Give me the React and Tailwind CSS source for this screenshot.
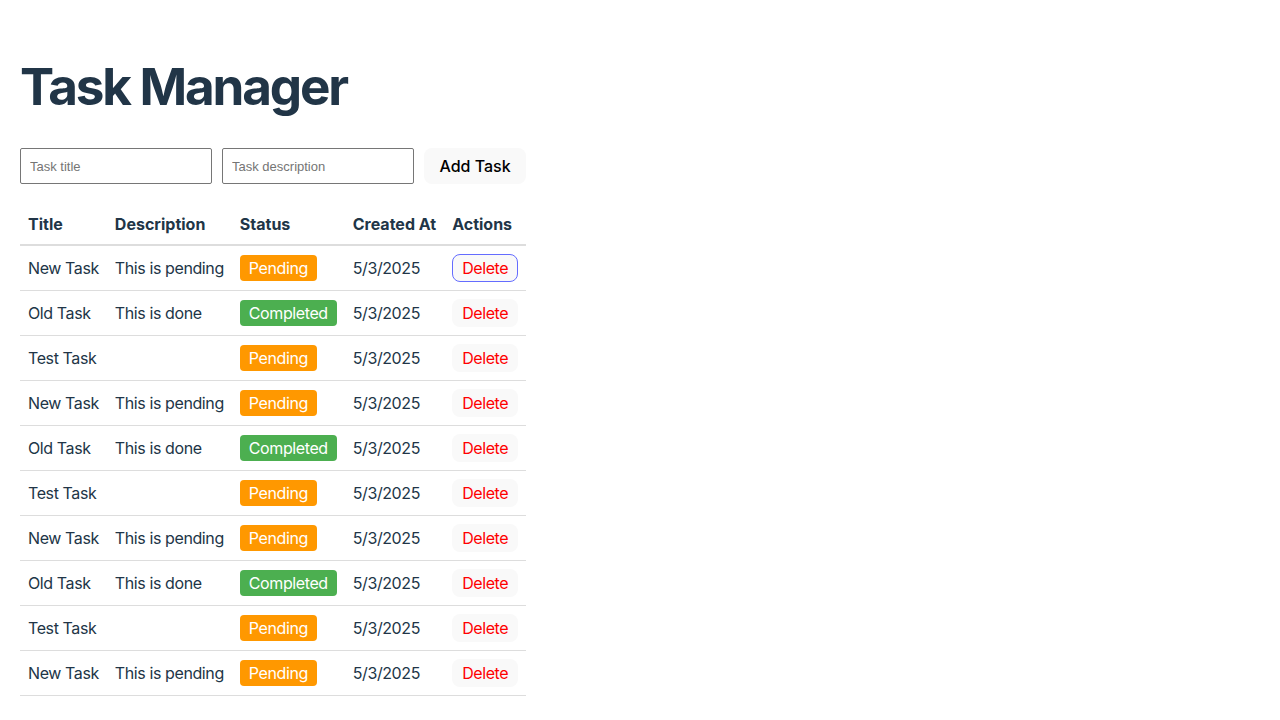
import { useState } from "react"

const seed = [
    { title: "New Task", description: "This is pending", status: "Pending" },
    { title: "Old Task", description: "This is done", status: "Completed" },
    { title: "Test Task", description: "", status: "Pending" },
]

export default function App() {
    const [tasks, setTasks] = useState(
        Array.from({ length: 10 }, (_, i) => ({ id: i, ...seed[i % 3], createdAt: "5/3/2025" }))
    )
    const [title, setTitle] = useState("")
    const [description, setDescription] = useState("")

    const addTask = () => {
        if (!title) return
        setTasks([...tasks, { id: Date.now(), title, description, status: "Pending", createdAt: new Date().toLocaleDateString("en-US") }])
        setTitle("")
        setDescription("")
    }

    const deleteTask = id => setTasks(tasks.filter(t => t.id !== id))

    return (
        <div className="min-h-svh bg-white px-5 pt-[24px] text-[#213547]" style={{ fontFamily: "Inter, 'Noto Sans', sans-serif" }}>
            <h1 className="text-[51.2px] leading-[1.1] font-bold tracking-[-0.043em] my-[34px]">Task Manager</h1>
            <div className="flex gap-[10px] items-center">
                <input
                    value={title}
                    onChange={e => setTitle(e.target.value)}
                    placeholder="Task title"
                    className="w-[192px] h-9 border border-[#767676] rounded-[2px] px-[9px] text-[13px] text-black placeholder:text-[#757575] outline-none"
                    style={{ fontFamily: "'Liberation Sans', Arial, sans-serif" }}
                />
                <input
                    value={description}
                    onChange={e => setDescription(e.target.value)}
                    placeholder="Task description"
                    className="w-[192px] h-9 border border-[#767676] rounded-[2px] px-[9px] text-[13px] text-black placeholder:text-[#757575] outline-none"
                    style={{ fontFamily: "'Liberation Sans', Arial, sans-serif" }}
                />
                <button onClick={addTask} className="h-9 w-[102px] rounded-lg bg-[#f9f9f9] text-black text-base font-medium">Add Task</button>
            </div>
            <table className="mt-[20px] border-collapse text-left text-base tracking-[-0.4px]">
                <thead>
                    <tr className="border-b-2 border-[#dddddd] tracking-normal">
                        <th className="px-2 py-2 font-bold">Title</th>
                        <th className="px-2 py-2 font-bold">Description</th>
                        <th className="px-2 py-2 font-bold">Status</th>
                        <th className="px-2 py-2 font-bold">Created At</th>
                        <th className="px-2 py-2 font-bold">Actions</th>
                    </tr>
                </thead>
                <tbody>
                    {tasks.map((task, i) => (
                        <tr key={task.id} className="border-b border-[#dddddd]">
                            <td className="px-2 py-2">{task.title}</td>
                            <td className="px-2 py-2">{task.description}</td>
                            <td className="px-2 py-2">
                                <span className={`inline-block rounded-[4px] px-[9px] py-[1px] text-white ${task.status === "Completed" ? "bg-[#4caf50]" : "bg-[#ff9800]"}`}>
                                    {task.status}
                                </span>
                            </td>
                            <td className="px-2 py-2">{task.createdAt}</td>
                            <td className="px-2 py-2">
                                <button
                                    onClick={() => deleteTask(task.id)}
                                    className={`h-7 px-[9px] rounded-lg bg-[#f9f9f9] text-[#ff0000] border ${i === 0 ? "border-[#646cff]" : "border-transparent"}`}
                                >
                                    Delete
                                </button>
                            </td>
                        </tr>
                    ))}
                </tbody>
            </table>
        </div>
    )
}
